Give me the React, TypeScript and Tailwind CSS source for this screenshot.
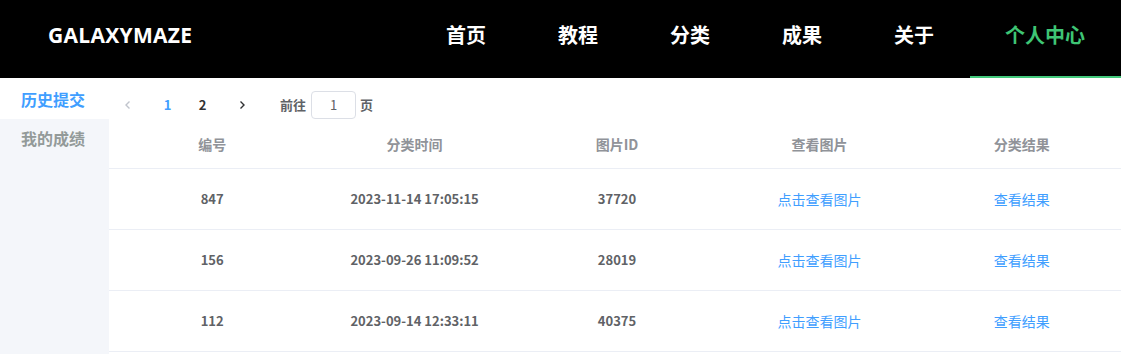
import React from 'react';

const navItems = ['首页', '教程', '分类', '成果', '关于', '个人中心'];

const rows = [
  { id: '847', time: '2023-11-14 17:05:15', pic: '37720' },
  { id: '156', time: '2023-09-26 11:09:52', pic: '28019' },
  { id: '112', time: '2023-09-14 12:33:11', pic: '40375' },
];

const cjk = { fontFamily: '"Noto Sans CJK SC", "Noto Sans", sans-serif' };

const cell = 'flex items-center justify-center pl-[4px]';

export default function App() {
  return (
    <div className="w-[1121px] h-[354px] bg-white overflow-hidden" style={cjk}>
      {/* Header */}
      <div className="h-[78px] bg-black flex items-stretch">
        <div
          className="pl-[48px] flex items-center pb-[7px] text-white font-bold text-[21px] tracking-[0.3px]"
          style={{ fontFamily: '"Open Sans", "Noto Sans", sans-serif' }}
        >
          GALAXYMAZE
        </div>
        <div className="ml-auto flex items-stretch">
          {navItems.map((n) => {
            const active = n === '个人中心';
            return (
              <div
                key={n}
                className={
                  'flex items-center pb-[6px] text-[20px] font-bold border-b-2 ' +
                  (active
                    ? 'pl-[35px] pr-[36px] text-[#3ec574] border-[#42c97b]'
                    : 'px-[36px] text-white border-transparent')
                }
              >
                {n}
              </div>
            );
          })}
        </div>
      </div>

      <div className="flex h-[276px]">
        {/* Sidebar */}
        <div className="w-[109px] bg-[#f4f6fa] flex flex-col">
          <div className="h-[41px] bg-white flex items-center pl-[21px] text-[16px] font-bold text-[#409eff]">
            历史提交
          </div>
          <div className="h-[38px] flex items-center pl-[21px] text-[16px] font-bold text-[#939a99]">
            我的成绩
          </div>
        </div>

        {/* Main */}
        <div className="flex-1 flex flex-col">
          <div className="h-[43px] flex items-center pt-[10px] pl-[2px] text-[13px] font-bold">
            <div className="w-[34px] flex justify-center text-[#c0c4cc]">
              <svg width="10" height="10" viewBox="0 0 10 10" fill="none" stroke="currentColor" strokeWidth="1.4">
                <path d="M6.5 1.5 L3 5 L6.5 8.5" />
              </svg>
            </div>
            <div className="w-[35px] ml-[5px] text-center text-[#409eff]">1</div>
            <div className="w-[35px] text-center text-[#303133]">2</div>
            <div className="w-[34px] ml-[5px] flex justify-center text-[#303133]">
              <svg width="10" height="10" viewBox="0 0 10 10" fill="none" stroke="currentColor" strokeWidth="1.4">
                <path d="M3.5 1.5 L7 5 L3.5 8.5" />
              </svg>
            </div>
            <div className="ml-[21px] text-[#606266]">前往</div>
            <div className="ml-[5px] w-[45px] h-[28px] border border-[#dcdfe6] rounded-[4px] flex items-center justify-center font-normal text-[#606266]">
              1
            </div>
            <div className="ml-[4px] text-[#606266]">页</div>
          </div>

          <div className="grid grid-cols-5 h-[48px] border-b border-[#ebeef5] text-[14px] font-bold text-[#909399]">
            {['编号', '分类时间', '图片ID', '查看图片', '分类结果'].map((h) => (
              <div key={h} className={cell}>
                {h}
              </div>
            ))}
          </div>

          {rows.map((r) => (
            <div key={r.id} className="grid grid-cols-5 h-[61px] border-b border-[#ebeef5] text-[14px]">
              <div className={cell + ' font-bold text-[13px] text-[#606266]'}>{r.id}</div>
              <div className={cell + ' font-bold text-[13px] text-[#606266]'}>{r.time}</div>
              <div className={cell + ' font-bold text-[13px] text-[#606266]'}>{r.pic}</div>
              <div className={cell + ' text-[#409eff]'}>点击查看图片</div>
              <div className={cell + ' text-[#409eff]'}>查看结果</div>
            </div>
          ))}
        </div>
      </div>
    </div>
  );
}
